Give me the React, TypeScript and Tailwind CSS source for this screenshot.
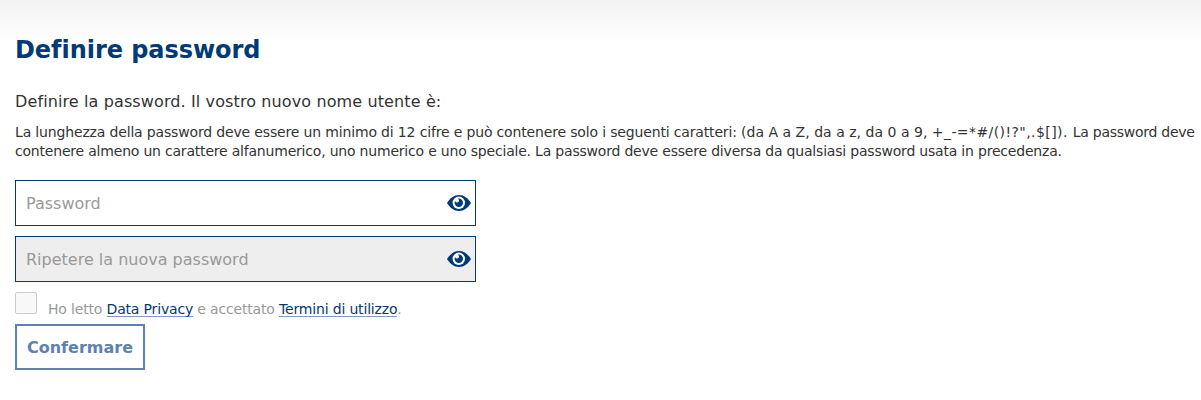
const EyeIcon = () => (
  <svg width="24" height="18" viewBox="0 0 24 18" className="shrink-0">
    <path d="M0 9C3 4.200 7 1 12 1s9 3.200 12 8C21 13.800 17 17 12 17S3 13.800 0 9Z" fill="#003a78" />
    <circle cx="11.800" cy="8.800" r="6.200" fill="#fff" />
    <path d="M11.800 4.600a4.200 4.200 0 1 1-4.200 4.200c0-.7.2-1.300.5-1.900.5 1.100 1.200 1.600 2.100 1.600 1.100 0 1.900-.8 1.900-1.900 0-.8-.4-1.500-1.200-1.900.3-.1.600-.1.900-.1Z" fill="#003a78" />
  </svg>
);

export default function App() {
  return (
    <main className="h-[400px] overflow-hidden bg-white bg-linear-to-b from-[#f2f2f2] to-white to-[42px] px-[15px] pt-[34px] font-['DejaVu_Sans',sans-serif] text-[#333] [font-variant-ligatures:none]">
      <h1 className="h-8 whitespace-nowrap text-2xl font-bold leading-8 tracking-[-0.05px] text-[#003a78]">
        <span>Definire password</span>
      </h1>
      <p className="mt-[26px] h-5 whitespace-nowrap text-base leading-5 tracking-[0.115px]">
        <span>Definire la password. Il vostro nuovo nome utente è:</span>
      </p>
      <p className="mt-[11px] whitespace-nowrap text-sm leading-[19px] tracking-[-0.202px]">
        <span className="tracking-[-0.16px]">La lunghezza della password deve essere un minimo di 12 cifre e può contenere solo i seguenti caratteri: </span>
        <span className="tracking-[0.02px]">(da A a Z, da a z, da 0 a 9, </span>
        <span className="tracking-[0.42px]">+_-=*#/()!?",.$[]). </span>
        <span className="tracking-[-0.26px]">La password deve</span>
        <br />
        <span>contenere almeno un carattere alfanumerico, uno numerico e uno speciale. La password deve essere diversa da qualsiasi password usata in precedenza.</span>
      </p>
      <form>
        <div className="mt-[19px] flex h-[46px] w-[461px] items-center justify-between border border-[#003a78] pl-2.5 pr-1 text-[#999]">
          <span className="pt-0.5">Password</span>
          <EyeIcon />
        </div>
        <div className="mt-2.5 flex h-[46px] w-[461px] items-center justify-between border border-[#003a78] bg-[#eee] pl-2.5 pr-1 text-[#999]">
          <span className="pt-0.5">Ripetere la nuova password</span>
          <EyeIcon />
        </div>
        <div className="mt-2.5 flex h-8 whitespace-nowrap text-sm text-[#999]">
          <span className="mr-[11px] size-[22px] rounded-xs border border-[#ccc] bg-[#f8f8f8]" />
          <p className="pt-[9px] leading-4 tracking-[-0.17px]">
            Ho letto{' '}
            <a className="inline-block h-4 border-b border-[#809cc0] text-[#003a78]">Data Privacy</a>
            {' '}e accettato{' '}
            <a className="inline-block h-4 border-b border-[#809cc0] text-[#003a78]">Termini di utilizzo</a>.
          </p>
        </div>
        <button type="button" className="flex h-[46px] w-[130px] items-center justify-center border-2 border-[#5f81ae] pt-0.5 font-bold text-[#5f81ae]">
          Confermare
        </button>
      </form>
    </main>
  );
}
